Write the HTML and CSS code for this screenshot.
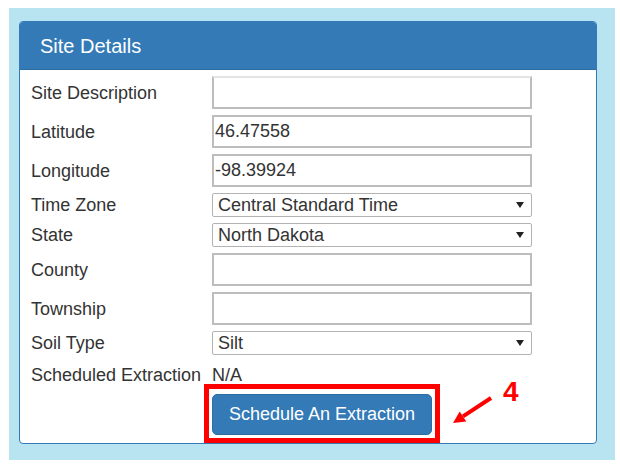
FILE: index.html
```html
<!DOCTYPE html>
<html>
<head>
    <title>Site Details</title>
    <link rel="stylesheet" href="styles.css">
</head>
<body>
    <div class="backdrop">
        <div class="panel">
            <div class="panel-heading">Site Details</div>
            <div class="panel-body">
                <label>Site Description</label>
                <input type="text" class="field field-desc" value="">

                <label>Latitude</label>
                <input type="text" class="field" value="46.47558">

                <label>Longitude</label>
                <input type="text" class="field" value="-98.39924">

                <label>Time Zone</label>
                <div class="select">Central Standard Time</div>

                <label>State</label>
                <div class="select">North Dakota</div>

                <label>County</label>
                <input type="text" class="field" value="">

                <label>Township</label>
                <input type="text" class="field" value="">

                <label>Soil Type</label>
                <div class="select">Silt</div>

                <label class="row-static">Scheduled Extraction</label>
                <div class="row-static">N/A</div>

                <div class="button-cell">
                    <button type="button" class="btn-primary">Schedule An Extraction</button>
                    <span class="highlight"></span>
                </div>
            </div>
        </div>

        <!-- annotation -->
        <svg class="callout-arrow" width="50" height="35" viewBox="0 0 50 35">
            <line x1="42" y1="5" x2="14" y2="23.4" stroke="#ff0000" stroke-width="4"/>
            <polygon points="4,30 17.3,28.4 10.7,18.4" fill="#ff0000"/>
        </svg>
        <span class="callout-number">4</span>
    </div>
</body>
</html>
```

FILE: styles.css
```css
body {
    margin: 0;
    padding: 0;
    background-color: #ffffff;
    font-family: "Liberation Sans", Arial, sans-serif;
    color: #333;
}

.backdrop {
    position: relative;
    width: 606px;
    height: 452px;
    margin: 8px 0 0 9px;
    padding: 13px 0 0 10px;
    box-sizing: border-box;
    background-color: #b8e4f2;
}

.panel {
    width: 578px;
    background-color: #fff;
    border: 1px solid #337ab7;
    border-radius: 4px;
    box-sizing: border-box;
}

.panel-heading {
    height: 47px;
    padding-left: 20px;
    background-color: #337ab7;
    border-bottom: 1px solid #2e6da4;
    border-radius: 3px 3px 0 0;
    color: #fff;
    font-size: 20px;
    line-height: 48px;
}

.panel-body {
    display: grid;
    grid-template-columns: 181px 320px;
    row-gap: 6px;
    align-items: center;
    padding: 6px 0 8px 11px;
}

.panel-body label {
    font-size: 18px;
    line-height: 20px;
    white-space: nowrap;
}

.field {
    height: 33px;
    margin: 0;
    padding: 0 1px;
    border: 2px solid #bdbdbd;
    box-sizing: border-box;
    font-family: inherit;
    font-size: 18px;
    color: #333;
    outline: none;
}

.field-desc {
    border-top-color: #e4e4e4;
}

.select {
    position: relative;
    height: 24px;
    padding-left: 5px;
    border: 1px solid #b3b3b3;
    border-radius: 2px;
    box-sizing: border-box;
    font-size: 18px;
    line-height: 22px;
    color: #333;
}

.select::after {
    content: "";
    position: absolute;
    right: 7px;
    top: 8px;
    border-left: 4px solid transparent;
    border-right: 4px solid transparent;
    border-top: 6px solid #222;
}

.panel-body .row-static {
    height: 28px;
    font-size: 18px;
    line-height: 28px;
}

.button-cell {
    grid-column: 2;
    position: relative;
    justify-self: start;
    margin-top: -1px;
}

.btn-primary {
    display: block;
    width: 220px;
    height: 41px;
    padding: 0;
    background-color: #337ab7;
    border: 1px solid #2e6da4;
    border-radius: 5px;
    color: #fff;
    font-family: inherit;
    font-size: 18px;
    cursor: pointer;
}

.highlight {
    position: absolute;
    top: -10px;
    left: -8px;
    right: -8px;
    bottom: -8px;
    border: 5px solid #ff0000;
    pointer-events: none;
}

.callout-arrow {
    position: absolute;
    left: 440px;
    top: 385px;
}

.callout-number {
    position: absolute;
    left: 494px;
    top: 370px;
    font-size: 28px;
    line-height: 28px;
    font-weight: bold;
    color: #ff0000;
}
```
